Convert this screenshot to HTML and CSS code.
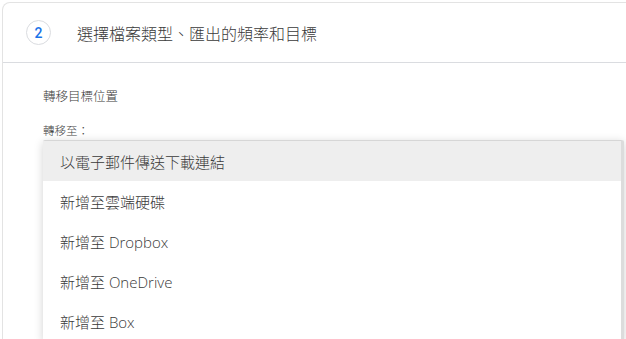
FILE: index.html
```html
<!DOCTYPE html>
<html lang="zh-Hant">
<head>
<meta charset="utf-8">
<link rel="stylesheet" href="styles.css">
</head>
<body>
<div class="card">
  <div class="head">
    <span class="step">2</span>
    <span class="title">選擇檔案類型、匯出的頻率和目標</span>
  </div>
  <div class="body">
    <div class="section">轉移目標位置</div>
    <div class="label">轉移至：</div>
    <div class="menu">
      <div class="item active">以電子郵件傳送下載連結</div>
      <div class="item">新增至雲端硬碟</div>
      <div class="item">新增至 Dropbox</div>
      <div class="item">新增至 OneDrive</div>
      <div class="item">新增至 Box</div>
    </div>
  </div>
</div>
</body>
</html>
```
FILE: styles.css
```css
html, body {
  margin: 0;
  padding: 0;
  width: 626px;
  height: 339px;
  overflow: hidden;
  background: #fff;
  font-family: "Open Sans", "Noto Sans CJK TC", sans-serif;
  font-weight: 300;
  color: #3a3a3a;
}
.card {
  margin: 2px 0 0 2px;
  width: 640px;
  height: 337px;
  border: 1px solid #e3e3e3;
  border-bottom: none;
  border-radius: 8px 0 0 0;
  box-sizing: border-box;
}
.head {
  height: 59px;
  display: flex;
  align-items: center;
  padding-left: 23px;
  border-bottom: 1px solid #dadce0;
}
.step {
  width: 25px;
  height: 25px;
  border: 1px solid #dadce0;
  border-radius: 50%;
  display: flex;
  align-items: center;
  justify-content: center;
  box-sizing: border-box;
  color: #1a73e8;
  font-family: "Roboto", sans-serif;
  font-weight: 500;
  font-size: 14px;
}
.title {
  margin-left: 26px;
  font-size: 16px;
  color: #3a3a3a;
}
.body {
  padding: 25px 0 0 40px;
  position: relative;
}
.section {
  font-size: 12.5px;
  line-height: 18px;
  color: #3a3a3a;
}
.label {
  margin-top: 17px;
  font-size: 11.5px;
  line-height: 16px;
  color: #444;
}
.menu {
  position: absolute;
  left: 40px;
  top: 77px;
  width: 578px;
  background: #fff;
  border-top: 1px solid #d6d6d6;
  border-right: 3px solid #dcdcdc;
  box-shadow: 0 2px 10px rgba(0,0,0,0.18);
  border-radius: 2px;
}
.item {
  height: 40px;
  display: flex;
  align-items: center;
  padding-left: 17px;
  font-size: 15px;
  color: #3a3a3a;
}
.item.active {
  background: #eeeeee;
}
```
